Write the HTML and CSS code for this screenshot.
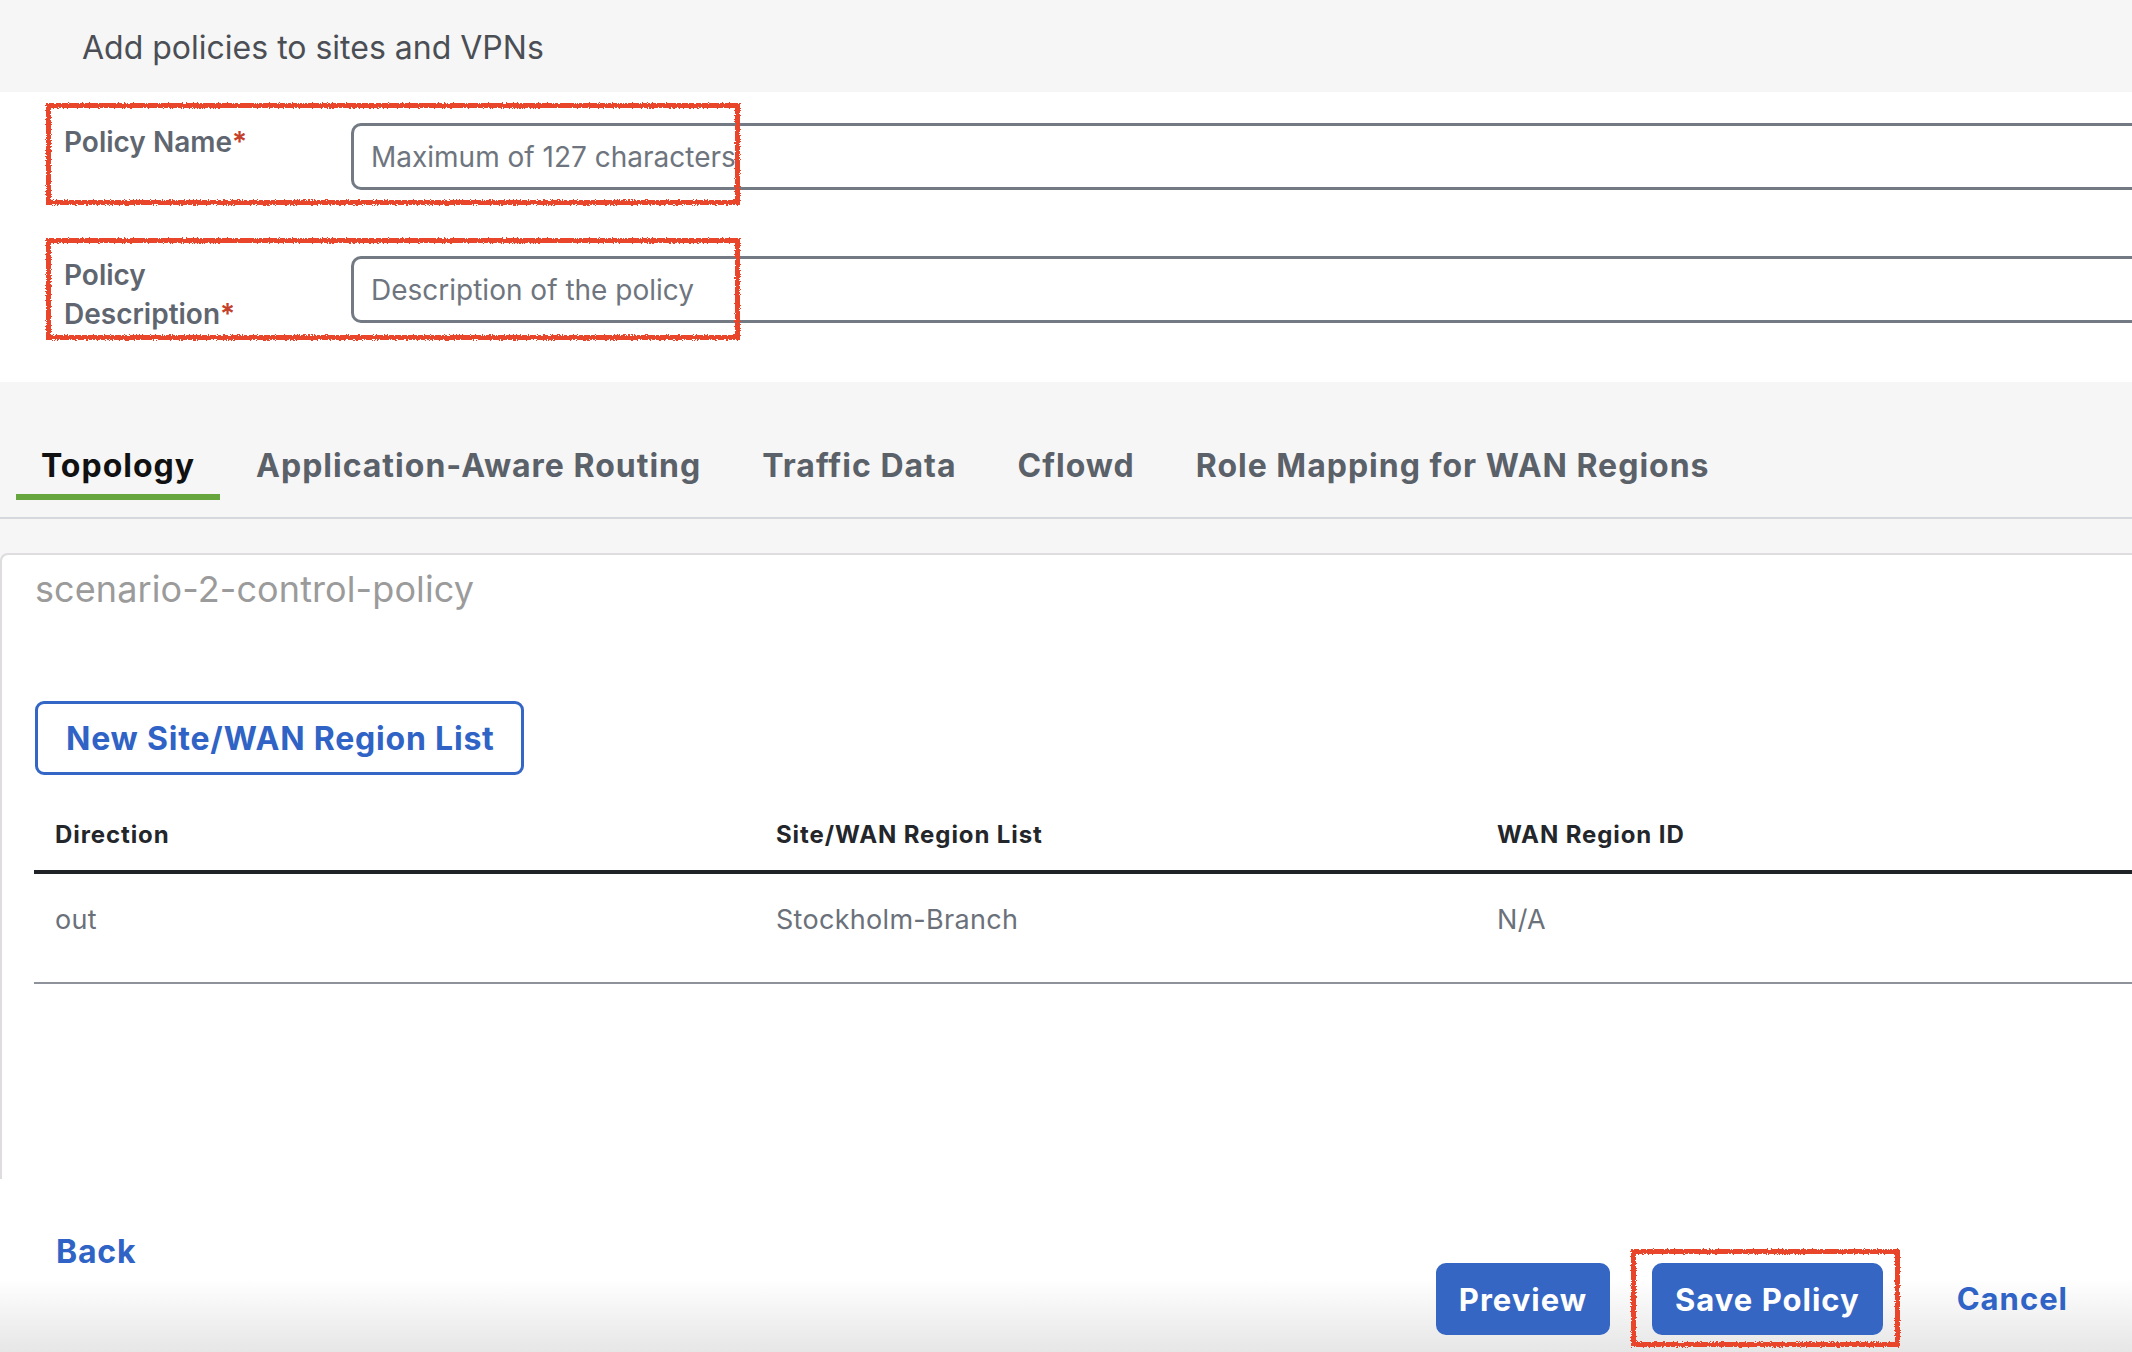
FILE: index.html
```html
<!DOCTYPE html>
<html lang="en">
<head>
<meta charset="utf-8">
<title>Add policies to sites and VPNs</title>
<link rel="stylesheet" href="styles.css">
</head>
<body>
<svg class="defs" width="0" height="0" aria-hidden="true">
  <filter id="rough" x="-5%" y="-5%" width="110%" height="110%">
    <feTurbulence type="fractalNoise" baseFrequency="0.8" numOctaves="2" seed="3" result="noise"/>
    <feDisplacementMap in="SourceGraphic" in2="noise" scale="4" xChannelSelector="R" yChannelSelector="G"/>
  </filter>
</svg>
<div class="page">
  <header class="topbar">
    <h1 class="title">Add policies to sites and VPNs</h1>
  </header>

  <section class="form">
    <div class="field">
      <label class="label">Policy Name<span class="req">*</span></label>
      <input class="input" type="text" placeholder="Maximum of 127 characters">
    </div>
    <div class="field">
      <label class="label">Policy Description<span class="req">*</span></label>
      <input class="input input-tall" type="text" placeholder="Description of the policy">
    </div>
    <div class="mark mark-name"></div>
    <div class="mark mark-desc"></div>
  </section>

  <nav class="tabs">
    <span class="tab active">Topology</span>
    <span class="tab">Application-Aware Routing</span>
    <span class="tab">Traffic Data</span>
    <span class="tab">Cflowd</span>
    <span class="tab">Role Mapping for WAN Regions</span>
  </nav>

  <div class="content">
    <section class="card">
      <h2 class="card-title">scenario-2-control-policy</h2>
      <button class="btn-outline" type="button">New Site/WAN Region List</button>
      <div class="table">
        <div class="thead">
          <div class="th">Direction</div>
          <div class="th">Site/WAN Region List</div>
          <div class="th">WAN Region ID</div>
        </div>
        <div class="trow">
          <div class="td">out</div>
          <div class="td">Stockholm-Branch</div>
          <div class="td">N/A</div>
        </div>
      </div>
    </section>
  </div>

  <footer class="footer">
    <a class="back">Back</a>
    <div class="actions">
      <button class="btn" type="button">Preview</button>
      <span class="save-wrap">
        <button class="btn btn-save" type="button">Save Policy</button>
        <span class="mark mark-save"></span>
      </span>
      <a class="cancel">Cancel</a>
    </div>
  </footer>
</div>
</body>
</html>
```
FILE: styles.css
```css
* { box-sizing: border-box; margin: 0; padding: 0; }
html, body { width: 100%; height: 100%; overflow: hidden; }
body {
  font-family: Inter, "Noto Sans", "Liberation Sans", sans-serif;
  background: #fff;
  color: #333;
}
.defs { position: absolute; width: 0; height: 0; }

.page {
  width: 2132px;
  height: 1352px;
  display: flex;
  flex-direction: column;
  overflow: hidden;
}

/* header */
.topbar {
  flex: none;
  height: 92px;
  background: #f6f6f6;
  padding: 4px 0 0 82px;
  display: flex;
  align-items: center;
}
.title {
  font-size: 32px;
  line-height: 40px;
  font-weight: 400;
  color: #4b4f55;
}

/* form */
.form {
  flex: none;
  position: relative;
  padding: 31px 0 48px 64px;
  display: flex;
  flex-direction: column;
  gap: 66px;
}
.field {
  display: flex;
  align-items: flex-start;
}
.label {
  flex: none;
  width: 287px;
  padding-right: 80px;
  font-size: 28px;
  line-height: 39px;
  font-weight: 600;
  color: #5f6670;
}
.req { color: #c4402a; }
.input {
  flex: 1;
  min-width: 0;
  height: 67px;
  margin-right: -40px;
  border: 3px solid #737a83;
  border-radius: 10px;
  padding: 0 17px;
  font-family: inherit;
  font-size: 28px;
  color: #333;
  background: #fff;
  outline: none;
}
.input::placeholder { color: #6e757e; }

.mark {
  position: absolute;
  border: 5px solid #e8442a;
  filter: url(#rough);
  pointer-events: none;
}
.mark-name { left: 46px; top: 11px; width: 694px; height: 102px; }
.mark-desc { left: 46px; top: 146px; width: 694px; height: 102px; }

/* tabs */
.tabs {
  flex: none;
  background: #f6f6f6;
  padding: 64px 0 17px 16px;
  border-bottom: 2px solid #d5d8dc;
  display: flex;
  gap: 11px;
}
.tab {
  font-size: 32px;
  line-height: 40px;
  font-weight: 700;
  letter-spacing: 1px;
  color: #5b6169;
  padding: 0 25px 8px;
  border-bottom: 6px solid transparent;
  white-space: nowrap;
}
.tab.active {
  color: #111;
  border-bottom-color: #67a53f;
}

/* content card */
.content {
  flex: none;
  background: #f6f6f6;
  padding-top: 34px;
}
.card {
  height: 626px;
  margin-right: -40px;
  background: #fff;
  border: 2px solid #dedcde;
  border-right: 0;
  border-bottom: 0;
  border-radius: 8px 0 0 0;
  padding: 13px 0 0 33px;
  display: flex;
  flex-direction: column;
  align-items: flex-start;
}
.card-title {
  font-size: 36px;
  line-height: 42px;
  font-weight: 400;
  letter-spacing: 0.1px;
  color: #9b9b9b;
}
.btn-outline {
  margin-top: 91px;
  height: 74px;
  padding: 0 26px 0 28px;
  border: 3px solid #3467c5;
  border-radius: 9px;
  background: #fff;
  color: #2f63c5;
  font-family: inherit;
  font-size: 32px;
  font-weight: 700;
  letter-spacing: 0.8px;
  display: inline-flex;
  align-items: center;
}

.table {
  align-self: stretch;
  margin-top: 45px;
  margin-left: -1px;
}
.thead, .trow {
  display: grid;
  grid-template-columns: 721px 721px 1fr;
}
.thead {
  padding-bottom: 20px;
  border-bottom: 4px solid #1f2226;
}
.th {
  padding-left: 21px;
  font-size: 24px;
  line-height: 30px;
  font-weight: 700;
  letter-spacing: 0.9px;
  color: #23262a;
}
.trow {
  padding: 28px 0 44px;
  border-bottom: 2px solid #8e939b;
}
.td {
  padding-left: 21px;
  font-size: 27px;
  line-height: 36px;
  letter-spacing: 0.3px;
  color: #6b717a;
}

/* footer */
.footer {
  flex: 1;
  display: flex;
  justify-content: space-between;
  background: linear-gradient(#fff 0, #fff 100px, #e6e6e6 100%);
}
.back {
  align-self: flex-start;
  padding: 53px 0 0 56px;
  font-size: 32px;
  line-height: 40px;
  font-weight: 700;
  letter-spacing: 0.8px;
  color: #2f63c5;
}
.actions {
  align-self: flex-end;
  display: flex;
  align-items: center;
  gap: 42px;
  padding-bottom: 17px;
}
.btn {
  height: 72px;
  padding: 0 23px;
  border: 0;
  border-radius: 10px;
  background: #3566c3;
  color: #fff;
  font-family: inherit;
  font-size: 31px;
  font-weight: 700;
  letter-spacing: 1px;
}
.save-wrap {
  position: relative;
  display: flex;
}
.mark-save { left: -21px; top: -14px; width: 269px; height: 98px; }
.cancel {
  padding: 0 64px 0 32px;
  font-size: 31px;
  line-height: 40px;
  font-weight: 700;
  letter-spacing: 1px;
  color: #2f63c5;
}
```
